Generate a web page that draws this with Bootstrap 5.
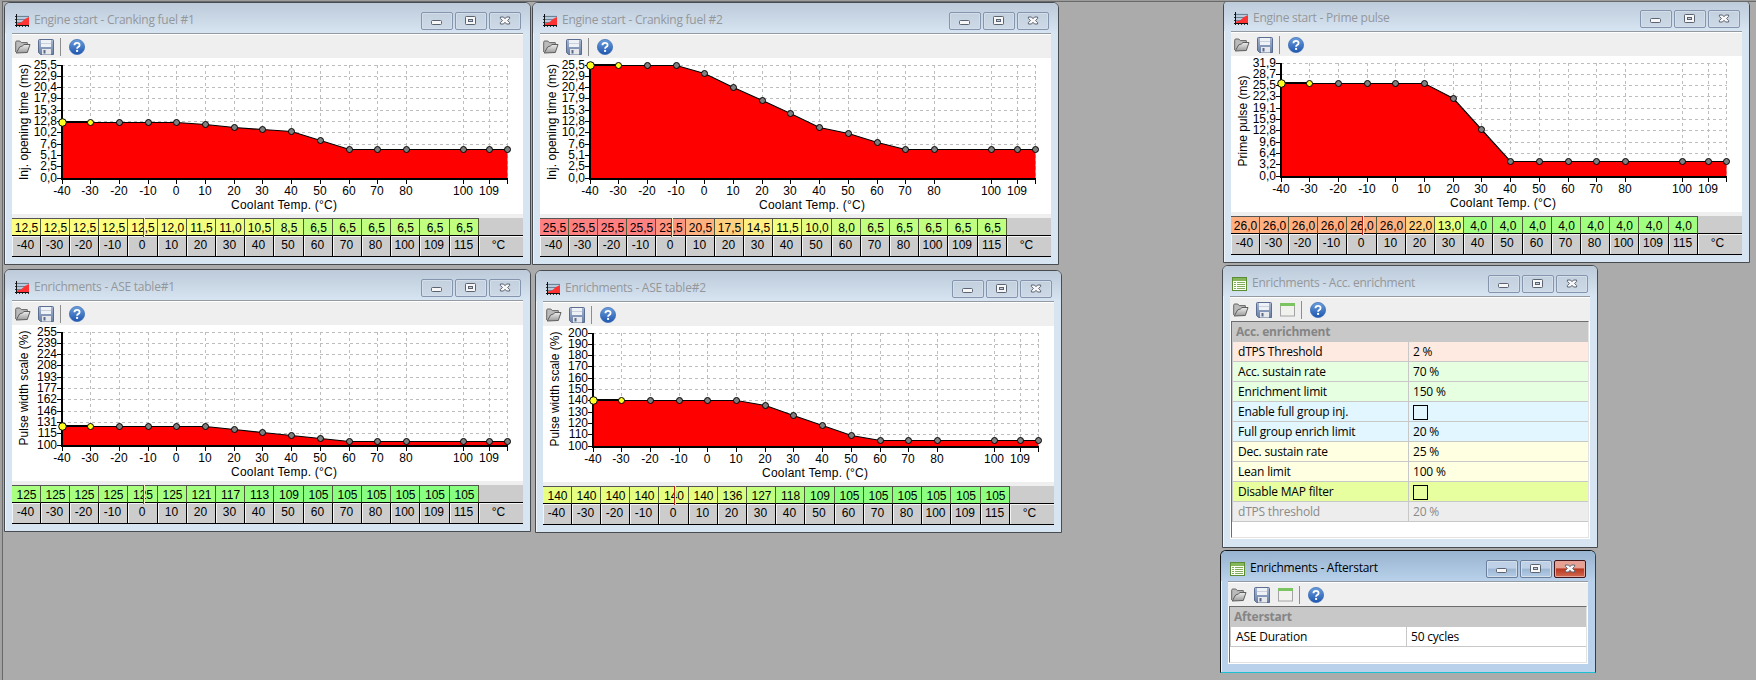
<!DOCTYPE html>
<html lang="en">
<head>
<meta charset="utf-8">
<title>Engine tuning workspace</title>
<link href="https://cdn.jsdelivr.net/npm/bootstrap@5.3.0/dist/css/bootstrap.min.css" rel="stylesheet">
<style>
  body { margin: 0; background: #ababab; font-family: "Open Sans", "Noto Sans", sans-serif; font-size: 12px; color: #000; line-height: 1.2; }
  .desk { width: 1756px; height: 680px; background: #ababab; border-top: 1px solid #9c9c9c; border-left: 2px solid #a2a2a2; }
  .desk-in { border-top: 1px solid #696969; border-left: 1px solid #696969; }
  .win { position: absolute; background: #d7e4f2; border: 1px solid #484b50; border-radius: 6px 6px 0 0; box-shadow: inset 1px 1px 0 #eef4fa; padding: 0 7px 7px; overflow: hidden; }
  .win-chart { width: 527px; height: 263px; }
  .w1 { left: 1px; top: 0; } .w2 { left: 529px; top: 0; } .w3 { left: 1220px; top: -2px; }
  .w4 { left: 1px; top: 267px; } .w5 { left: 532px; top: 268px; }
  .w6 { left: 1219px; top: 263px; width: 376px; height: 283px; }
  .w7 { left: 1217px; top: 548px; width: 376px; height: 123px; }
  .caption-bar { height: 30px; margin: 0 -7px; padding: 5px 9px 0 9px; color: #94979a; background: linear-gradient(#bccad9, #d7e4f2); }
  .caption-bar .ttl { letter-spacing: -.25px; padding-left: 5px; white-space: nowrap; font-size: 12px; }
  .on { border-color: #111; background: #b9d1ea; border-right-color: #1c4853; border-bottom-color: #1cc0d0; }
  .on .caption-bar { background: linear-gradient(#98b3d0, #b9d1ea); color: #000; }
  .wb { width: 32px; height: 18px; border: 1px solid #8595ae; border-radius: 2px; box-shadow: inset 0 0 0 1px #d3deea; background: linear-gradient(#c3d0de, #cdd9e6); margin-top: 1px; }
  .on .wb { border-color: #6a7f9c; background: linear-gradient(#bed1e6 45%, #9bb6d3 50%, #b5cde6); }
  .on .wb.x { border-color: #43151a; background: linear-gradient(#e6a193 42%, #b8381f 50%, #d2694f); box-shadow: inset 0 0 0 1px #e0a598; }
  .wb svg, .tools svg, .caption-bar svg { display: block; }
  .client { border-top: 1px solid #9599a0; background: #fff; }
  .tools { height: 24px; background: #efefef; border-top: 1px solid #fff; padding-left: 3px; }
  .sep { width: 1px; height: 18px; background: #8d8d8d; }
  .plot { height: 156px; }
  .plot svg { display: block; font: 12px "Liberation Sans", Arial, sans-serif; }
  .vals { border-top: 4px solid #efefef; position: relative; background: #ccc; font: 12px/16px "Liberation Sans", Arial, sans-serif; text-align: center; }
  .gridrow { display: grid; grid-template-columns: 29px 29px 29px 29px 30px 29px 29px 29px 29px 30px 29px 29px 29px 29px 30px 29px 44px; }
  .gridrow .v { height: 18px; border-top: 1px solid #555; border-right: 1px solid #4e5a38; border-bottom: 1px solid #000; padding-left: 1px; padding-top: 1px; }
  .gridrow .h { height: 21px; border-right: 1px solid #000; border-bottom: 1px solid #000; box-shadow: inset 1px 1px 0 #f4f4f4; line-height: 18px; padding-right: 1px; }
  .gridrow > :last-child { border-right: 0; } .gridrow .v:last-child { border-top-color: #ccc; }
  .gridrow .h:last-child { padding-right: 5px; }
  .mark-now { position: absolute; left: 131px; top: 0; width: 2px; height: 19px; background: #b5231a; border-right: 1px solid #f3efc0; }
  .props { border: 1px solid #6d6d6d; border-right-color: #e3e3e3; border-bottom-color: #e3e3e3; margin: 0 1px 0 1px; background: #fff; letter-spacing: -.2px; }
  .w6 .props { height: 217px; } .w7 .props { height: 57px; }
  .w6 .client, .w7 .client { padding-bottom: 1px; }
  .ph { height: 20px; background: #c8c8c8; color: #858585; font-weight: 700; padding: 3px 0 0 4px; }
  .pr { height: 20px; display: grid; grid-template-columns: 175px 1fr; border-left: 1px solid #c8c8c8; }
  .pr > div { border-bottom: 1px solid #c8c8c8; padding: 3px 0 0 5px; }
  .pr > div + div { border-left: 1px solid #c8c8c8; padding-left: 4px; }
  .cb { width: 15px; height: 15px; border: 1px solid #000; display: block; }
</style>
</head>
<body>
<svg width="0" height="0" class="position-absolute">
  <defs>
    <linearGradient id="gf" x2="0" y2="1"><stop stop-color="#eee"/><stop offset="1" stop-color="#999"/></linearGradient>
    <linearGradient id="gs" x2="0" y2="1"><stop stop-color="#a9b8d2"/><stop offset="1" stop-color="#6b80a6"/></linearGradient>
    <linearGradient id="gh" x2="0" y2="1"><stop stop-color="#6c9fdc"/><stop offset="1" stop-color="#1e56b0"/></linearGradient>
    <symbol id="i-chart" viewBox="0 0 14 14"><rect x="2" y="1" width="12" height="11" fill="#b9cbdc"/><path d="M2 2.5h12M2 5.5h9M2 8.5h5" stroke="#6c8296"/><path d="M2 11V9.500L6 8.500l4-3.500 4-2v8z" fill="#f33"/><path d="M1.500 0v13M0 11.500h14" stroke="#111" fill="none"/><path d="M0 2.500h1M0 5.500h1M0 8.500h1M4.500 12v1M7.500 12v1M10.500 12v1M13.500 12v1" stroke="#333" fill="none"/></symbol>
    <symbol id="i-list" viewBox="0 0 15 14"><rect x=".5" y=".5" width="14" height="13" fill="#fbfff5" stroke="#5c8c34"/><rect x="1" y="1" width="13" height="3" fill="#85b659"/><path d="M2 5.5h2M5 5.5h8M2 7.5h2M5 7.5h8M2 9.5h2M5 9.5h8M2 11.5h2M5 11.5h8" stroke="#81ad58"/></symbol>
    <symbol id="i-open" viewBox="0 0 16 14"><path d="M.7 12V2.2Q.7 1 1.8 1h3L6.3 2.6h6v3" fill="#bbb" stroke="#666"/><path d="M1.2 13 4.6 7l3-1.2L9 4.5h6L12.3 12.5z" fill="url(#gf)" stroke="#5d5d5d"/></symbol>
    <symbol id="i-save" viewBox="0 0 16 16"><path d="M.5 1.5q0-1 1-1h13q1 0 1 1v14h-13l-2-2z" fill="url(#gs)" stroke="#5b6d91"/><rect x="3" y="1" width="10" height="7" fill="#eef2f7"/><path d="M3 4.5h10" stroke="#c8d0dc"/><rect x="4" y="10" width="9" height="5.5" fill="#e6e8ec"/><rect x="5.5" y="11" width="2" height="3.5" fill="#5a6b8a"/></symbol>
    <symbol id="i-new" viewBox="0 0 15 14"><rect x=".5" y=".5" width="14" height="12.5" fill="#f1f1ed" stroke="#a4a4a4"/><rect width="15" height="3" fill="#7cc462"/></symbol>
    <symbol id="i-help" viewBox="0 0 16 16"><circle cx="8" cy="8" r="7.6" fill="url(#gh)" stroke="#3467b4" stroke-width=".7"/><path d="M5.4 6.2Q5.5 3.8 8 3.8t2.6 2.1Q10.6 7.2 9.2 8 8.1 8.6 8.1 9.8" fill="none" stroke="#fff" stroke-width="1.8"/><rect x="7.1" y="10.9" width="2" height="2" fill="#fff"/></symbol>
    <symbol id="i-min" viewBox="0 0 30 16"><rect x="9.5" y="7.5" width="10" height="4" rx="1" fill="#f7f7f7" stroke="#5b6370"/></symbol>
    <symbol id="i-max" viewBox="0 0 30 16"><rect x="9.500" y="3.500" width="10" height="8" rx=".8" fill="#f7f7f7" stroke="#5b6370"/><rect x="12.500" y="6.500" width="4" height="2" fill="#c3d0de" stroke="#5b6370"/></symbol>
    <symbol id="i-x" viewBox="0 0 30 16"><path d="M10.400 4h3.100l1.500 1.700L16.500 4h3.100v1.500l-2 2 2 2V11h-3.100L15 9.300 13.500 11h-3.100V9.500l2-2-2-2z" fill="#f7f7f7" stroke="#5b6370"/></symbol>
  </defs>
</svg>

<main class="desk overflow-hidden"><div class="desk-in position-relative overflow-hidden w-100 h-100">
  <section class="win win-chart w1" data-chart="0"></section>
  <section class="win win-chart w2" data-chart="1"></section>
  <section class="win win-chart w3" data-chart="2"></section>
  <section class="win win-chart w4" data-chart="3"></section>
  <section class="win win-chart w5" data-chart="4"></section>

  <section class="win w6">
    <header class="caption-bar d-flex align-items-center" data-title="Enrichments - Acc. enrichment" data-icon="list"></header>
    <div class="client">
      <div class="tools d-flex align-items-center" data-tools="new"></div>
      <div class="props">
        <div class="ph">Acc. enrichment</div>
        <div class="pr" style="background:#ffeae1"><div>dTPS Threshold</div><div>2 %</div></div>
        <div class="pr" style="background:#e7ffe1"><div>Acc. sustain rate</div><div>70 %</div></div>
        <div class="pr" style="background:#e7ffe1"><div>Enrichment limit</div><div>150 %</div></div>
        <div class="pr" style="background:#e1f6ff"><div>Enable full group inj.</div><div><span class="cb"></span></div></div>
        <div class="pr" style="background:#e1f6ff"><div>Full group enrich limit</div><div>20 %</div></div>
        <div class="pr" style="background:#ffffe1"><div>Dec. sustain rate</div><div>25 %</div></div>
        <div class="pr" style="background:#ffffe1"><div>Lean limit</div><div>100 %</div></div>
        <div class="pr" style="background:#e7ff9f"><div>Disable MAP filter</div><div><span class="cb"></span></div></div>
        <div class="pr" style="background:#ededed;color:#8a8a8a"><div>dTPS threshold</div><div>20 %</div></div>
      </div>
    </div>
  </section>

  <section class="win w7 on">
    <header class="caption-bar d-flex align-items-center" data-title="Enrichments - Afterstart" data-icon="list"></header>
    <div class="client">
      <div class="tools d-flex align-items-center" data-tools="new"></div>
      <div class="props">
        <div class="ph">Afterstart</div>
        <div class="pr"><div>ASE Duration</div><div>50 cycles</div></div>
      </div>
    </div>
  </section>
</div></main>

<script src="https://cdn.jsdelivr.net/npm/bootstrap@5.3.0/dist/js/bootstrap.bundle.min.js"></script>
<script>
const temps = [-40,-30,-20,-10,0,10,20,30,40,50,60,70,80,100,109,115];
const inj = ['25,5','22,9','20,4','17,9','15,3','12,8','10,2','7,6','5,1','2,5','0,0'];
const charts = [
  { title: 'Engine start - Cranking fuel #1', y: 'Inj. opening time (ms)', len: 116, mid: 64, lo: 0, hi: 25.5, dec: 1, ticks: inj,
    v: [12.5,12.5,12.5,12.5,12.5,12,11.5,11,10.5,8.5,6.5,6.5,6.5,6.5,6.5,6.5] },
  { title: 'Engine start - Cranking fuel #2', y: 'Inj. opening time (ms)', len: 116, mid: 64, lo: 0, hi: 25.5, dec: 1, ticks: inj,
    v: [25.5,25.5,25.5,25.5,23.5,20.5,17.5,14.5,11.5,10,8,6.5,6.5,6.5,6.5,6.5] },
  { title: 'Engine start - Prime pulse', y: 'Prime pulse (ms)', len: 91, mid: 65, lo: 0, hi: 31.9, dec: 1,
    ticks: ['31,9','28,7','25,5','22,3','19,1','15,9','12,8','9,6','6,4','3,2','0,0'],
    v: [26,26,26,26,26,26,22,13,4,4,4,4,4,4,4,4] },
  { title: 'Enrichments - ASE table#1', y: 'Pulse width scale (%)', len: 115, mid: 63, lo: 100, hi: 255, dec: 0,
    ticks: [255,239,224,208,193,177,162,146,131,115,100],
    v: [125,125,125,125,125,125,121,117,113,109,105,105,105,105,105,105] },
  { title: 'Enrichments - ASE table#2', y: 'Pulse width scale (%)', len: 115, mid: 63, lo: 100, hi: 200, dec: 0,
    ticks: [200,190,180,170,160,150,140,130,120,110,100],
    v: [140,140,140,140,140,140,136,127,118,109,105,105,105,105,105,105] }
];
const icon = (id, w, h, cls = '') => `<svg class="flex-shrink-0 ${cls}" width="${w}" height="${h}"><use href="#i-${id}"/></svg>`;
const caption = (title, kind) =>
  (kind === 'list' ? icon('list', 15, 14) : `<span style="padding-left:1px">${icon('chart', 14, 14)}</span>`) +
  `<span class="ttl flex-grow-1">${title}</span>
   <span class="d-flex" style="gap:2px"><span class="wb">${icon('min',30,16)}</span><span class="wb">${icon('max',30,16)}</span><span class="wb x">${icon('x',30,16)}</span></span>`;
const tools = extra => icon('open',16,14) + `<span style="width:7px"></span>` + icon('save',16,16) +
  (extra ? `<span style="width:8px"></span>${icon('new',15,14)}` : '') +
  `<span class="sep" style="margin:0 8px 0 6px"></span>` + icon('help',16,16);

function plot(c) {
  const X = t => Math.floor(50 + (t + 40) * 445 / 155) + .5;
  const Y = v => Math.floor(120 - 113 * (v - c.lo) / (c.hi - c.lo)) + .5;
  const gy = i => Math.floor(7 + 11.3 * i) + .5;
  let s = '<g stroke="#bdbdbd" stroke-dasharray="3 3" shape-rendering="crispEdges">';
  for (let i = 0; i < 10; i++) s += `<path d="M50 ${gy(i)}H496"/>`;
  temps.slice(1).forEach(t => s += `<path d="M${X(t)} 7V120"/>`);
  const pts = temps.map((t, i) => `${X(t)},${Y(c.v[i])}`);
  s += `</g><path d="M${pts.join('L')}V120H50.5z" fill="#f00"/><path d="M${pts.join('L')}" fill="none" stroke="#000" stroke-width="1.2"/>`;
  s += '<g stroke="#000" shape-rendering="crispEdges"><path d="M50 7V122M49 121H496" stroke-width="2"/>';
  for (let i = 0; i <= 10; i++) s += `<path d="M45 ${gy(i)}H50"/>`;
  temps.forEach(t => s += `<path d="M${X(t)} 121V126"/>`);
  s += `</g><path d="M50 ${Y(c.v[0]) - .5}H78" stroke="#000" stroke-width="2"/>`;
  temps.forEach((t, i) => s += `<circle cx="${X(t)}" cy="${Y(c.v[i])}" r="${i ? 3 : 3.8}" fill="${i < 2 ? '#ff2' : '#808080'}" stroke="#000"/>`);
  c.ticks.forEach((t, i) => s += `<text x="45" y="${gy(i) + 3.5}" text-anchor="end">${t}</text>`);
  temps.slice(0, -1).forEach(t => s += `<text x="${X(t) - .5}" y="137" text-anchor="middle">${t}</text>`);
  s += `<text x="272" y="151" text-anchor="middle" textLength="106">Coolant Temp. (°C)</text>
        <text transform="translate(16 ${c.mid}) rotate(-90)" text-anchor="middle" textLength="${c.len}">${c.y}</text>`;
  return `<svg width="511" height="156">${s}</svg>`;
}
function heat(c, v) {
  const t = 2 * (v - c.lo) / (c.hi - c.lo);
  return `rgb(${Math.round(128 + 127 * Math.min(1, t))},${Math.round(255 - 127 * Math.max(0, t - 1))},128)`;
}
document.querySelectorAll('[data-chart]').forEach(el => {
  const c = charts[el.dataset.chart];
  el.innerHTML = `<header class="caption-bar d-flex align-items-center">${caption(c.title)}</header>
    <div class="client"><div class="tools d-flex align-items-center">${tools(false)}</div>
    <div class="plot">${plot(c)}</div>
    <div class="vals">
      <div class="gridrow">${c.v.map(v => `<div class="v" style="background:${heat(c, v)}">${v.toFixed(c.dec).replace('.', ',')}</div>`).join('')}<div class="v"></div></div>
      <div class="gridrow">${temps.map(t => `<div class="h">${t}</div>`).join('')}<div class="h">°C</div></div>
      <span class="mark-now"></span>
    </div></div>`;
});
document.querySelectorAll('[data-title]').forEach(el => el.innerHTML = caption(el.dataset.title, el.dataset.icon));
document.querySelectorAll('[data-tools]').forEach(el => el.innerHTML = tools(true));
</script>
</body>
</html>
